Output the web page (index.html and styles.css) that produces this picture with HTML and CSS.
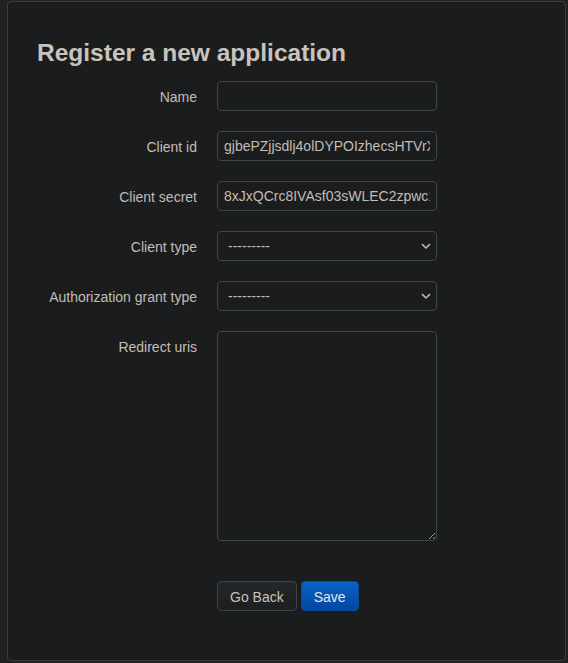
FILE: index.html
```html
<!DOCTYPE html>
<html>
<head>
<meta charset="utf-8">
<title>Register a new application</title>
<link rel="stylesheet" href="styles.css">
</head>
<body>
<div class="card">
  <h3 class="title">Register a new application</h3>
  <form class="form-horizontal">
    <div class="group">
      <label class="label">Name</label>
      <div class="controls"><input class="input" type="text" value=""></div>
    </div>
    <div class="group">
      <label class="label">Client id</label>
      <div class="controls"><input class="input" type="text" value="gjbePZjjsdlj4olDYPOIzhecsHTVrXq7kLmN2wT"></div>
    </div>
    <div class="group">
      <label class="label">Client secret</label>
      <div class="controls"><input class="input" type="text" value="8xJxQCrc8IVAsf03sWLEC2zpwc1R5tYbK9hUeD"></div>
    </div>
    <div class="group">
      <label class="label">Client type</label>
      <div class="controls">
        <div class="select-wrap">
          <select class="select"><option>---------</option></select>
          <svg class="chev" width="10" height="7" viewBox="0 0 10 7"><path d="M1 1.2 L5 5 L9 1.2" fill="none" stroke="#bdb7af" stroke-width="1.6"/></svg>
        </div>
      </div>
    </div>
    <div class="group">
      <label class="label">Authorization grant type</label>
      <div class="controls">
        <div class="select-wrap">
          <select class="select"><option>---------</option></select>
          <svg class="chev" width="10" height="7" viewBox="0 0 10 7"><path d="M1 1.2 L5 5 L9 1.2" fill="none" stroke="#bdb7af" stroke-width="1.6"/></svg>
        </div>
      </div>
    </div>
    <div class="group">
      <label class="label">Redirect uris</label>
      <div class="controls"><textarea class="textarea"></textarea></div>
    </div>
    <div class="actions">
      <a class="btn" href="#">Go Back</a>
      <button class="btn btn-primary" type="button">Save</button>
    </div>
  </form>
</div>
</body>
</html>
```

FILE: styles.css
```css
html, body {
  margin: 0;
  padding: 0;
  background: #1f2123;
  color-scheme: dark;
}
body {
  padding: 1px 2px 2px 7px;
  font-family: "Liberation Sans", Arial, sans-serif;
  font-size: 14px;
  line-height: 20px;
  color: #c8c3bc;
}
.card {
  box-sizing: border-box;
  height: 660px;
  border: 1px solid #3b3f42;
  border-radius: 4px;
  background: #1b1c1e;
  padding: 31px 29px 0 29px;
}
.title {
  margin: 0 0 8px 0;
  font-size: 24.5px;
  line-height: 40px;
  font-weight: bold;
  color: #c8c3bc;
}
.form-horizontal {
  margin: 0;
}
.group {
  display: flex;
  margin-bottom: 20px;
}
.label {
  width: 160px;
  flex: none;
  padding-top: 6px;
  text-align: right;
  color: #c2bdb5;
  font-size: 14px;
  line-height: 20px;
}
.controls {
  margin-left: 20px;
}
.input, .select, .textarea {
  box-sizing: border-box;
  width: 220px;
  height: 30px;
  margin: 0;
  padding: 4px 6px;
  border: 1px solid #3e4346;
  border-radius: 4px;
  background: #1b1c1e;
  color: #c2bdb5;
  font-family: "Liberation Sans", Arial, sans-serif;
  font-size: 14px;
  line-height: 20px;
  outline: none;
  display: block;
}
.select-wrap {
  position: relative;
  width: 220px;
}
.select {
  appearance: none;
  -webkit-appearance: none;
  padding-left: 10px;
}
.chev {
  position: absolute;
  right: 6px;
  top: 12px;
  pointer-events: none;
}
.textarea {
  height: 210px;
  resize: both;
}
.actions {
  display: flex;
  gap: 4px;
  margin-top: 40px;
  padding-left: 180px;
}
.btn {
  box-sizing: border-box;
  display: inline-block;
  height: 30px;
  padding: 5px 12px 3px;
  border: 1px solid #3e4346;
  border-radius: 4px;
  background: linear-gradient(to bottom, #242729, #1c1e20);
  color: #c8c3bc;
  font-family: "Liberation Sans", Arial, sans-serif;
  font-size: 14px;
  line-height: 20px;
  text-decoration: none;
  cursor: pointer;
}
.btn-primary {
  border-color: #0b4c97;
  background: linear-gradient(to bottom, #0a63c6, #0346a3);
  color: #e8e6e3;
}
```
